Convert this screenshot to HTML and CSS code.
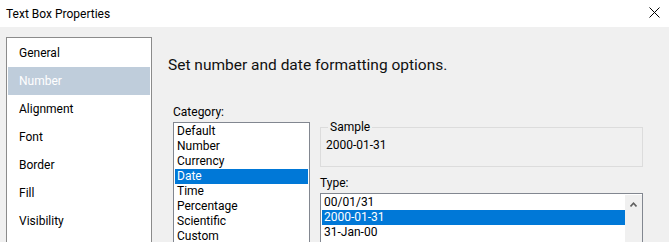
FILE: index.html
```html
<!DOCTYPE html>
<html>
<head>
<meta charset="utf-8">
<link rel="stylesheet" href="styles.css">
</head>
<body>
<div class="window">
  <div class="titlebar">
    <span class="title">Text Box Properties</span>
    <svg class="close" width="11" height="11" viewBox="0 0 11 11"><path d="M0.5 0.5L10.5 10.5M10.5 0.5L0.5 10.5" stroke="#000" stroke-width="1" fill="none"/></svg>
  </div>
  <div class="main">
    <div class="nav">
      <div class="nav-item">General</div>
      <div class="nav-item active">Number</div>
      <div class="nav-item">Alignment</div>
      <div class="nav-item">Font</div>
      <div class="nav-item">Border</div>
      <div class="nav-item">Fill</div>
      <div class="nav-item">Visibility</div>
    </div>
    <div class="content">
      <h1 class="heading">Set number and date formatting options.</h1>
      <div class="columns">
        <div class="col-left">
          <div class="label">Category:</div>
          <div class="listbox cat">
            <div class="row">Default</div>
            <div class="row">Number</div>
            <div class="row">Currency</div>
            <div class="row sel">Date</div>
            <div class="row">Time</div>
            <div class="row">Percentage</div>
            <div class="row">Scientific</div>
            <div class="row">Custom</div>
          </div>
        </div>
        <div class="col-right">
          <fieldset class="group">
            <legend class="legend">Sample</legend>
            <div class="sample">2000-01-31</div>
          </fieldset>
          <div class="label type-label">Type:</div>
          <div class="listbox type">
            <div class="rows">
              <div class="row">00/01/31</div>
              <div class="row sel">2000-01-31</div>
              <div class="row">31-Jan-00</div>
            </div>
            <div class="scrollbar">
              <svg class="arrow" width="7" height="5" viewBox="0 0 7 5"><path d="M0.5 4.5L3.5 1.2L6.5 4.5" stroke="#606060" stroke-width="1.6" fill="none"/></svg>
            </div>
          </div>
        </div>
      </div>
    </div>
  </div>
</div>
</body>
</html>
```
FILE: styles.css
```css
html, body {
  margin: 0;
  padding: 0;
  overflow: hidden;
}
body {
  width: 669px;
  height: 242px;
  background: #f0f0f0;
  font-family: Roboto, "Liberation Sans", Arial, sans-serif;
  font-size: 12px;
  color: #000;
}
.window {
  width: 669px;
  height: 242px;
  overflow: hidden;
}
.titlebar {
  box-sizing: border-box;
  width: 669px;
  height: 27px;
  background: #fff;
  display: flex;
  align-items: center;
  padding: 0 9px 0 6px;
}
.title {
  font-size: 12px;
}
.close {
  display: block;
  margin-left: auto;
  margin-top: -3px;
  flex: none;
}
.main {
  display: flex;
  align-items: flex-start;
}
.nav {
  margin: 10px 0 0 6px;
  width: 146px;
  height: 205px;
  box-sizing: border-box;
  border: 1px solid #8b8b8b;
  border-bottom: none;
  background: #fff;
  padding: 1px 1px 0 1px;
  flex: none;
}
.nav-item {
  height: 28px;
  line-height: 28px;
  padding-left: 11px;
}
.nav-item.active {
  background: #bfcddb;
  color: #fff;
}
.content {
  padding: 28px 0 0 16px;
}
.heading {
  margin: 0;
  font-size: 15.5px;
  font-weight: normal;
  line-height: 20px;
  color: #111;
}
.columns {
  display: flex;
  margin-top: 29px;
  margin-left: 5px;
  gap: 10px;
}
.col-left {
  width: 137px;
}
.col-right {
  width: 323px;
}
.label {
  height: 16px;
  line-height: 16px;
  margin-bottom: 2px;
}
.listbox {
  border: 1px solid #828790;
  border-bottom: none;
  background: #fff;
  padding: 1px 1px 0 1px;
  overflow: hidden;
}
.listbox.cat {
  margin-top: 1px;
  height: 119px;
}
.row {
  height: 15px;
  line-height: 15px;
  padding-left: 2px;
  white-space: nowrap;
}
.row.sel {
  background: #0078d7;
  color: #fff;
}
.group {
  margin: 16px 0 0 0;
  padding: 0 0 0 5px;
  border: 1px solid #dcdcdc;
  box-sizing: border-box;
  height: 47px;
}
.legend {
  margin-left: 2px;
  padding: 0 2px;
  line-height: 15px;
  font-size: 12px;
}
.sample {
  margin-top: 3px;
  line-height: 15px;
}
.type-label {
  margin-top: 8px;
}
.listbox.type {
  display: flex;
  padding: 1px 0 0 1px;
  height: 49px;
}
.rows {
  flex: 1;
}
.scrollbar {
  width: 17px;
  background: #f0f0f0;
  display: flex;
  justify-content: center;
  align-items: flex-start;
}
.arrow {
  display: block;
  margin-top: 7px;
}
```
